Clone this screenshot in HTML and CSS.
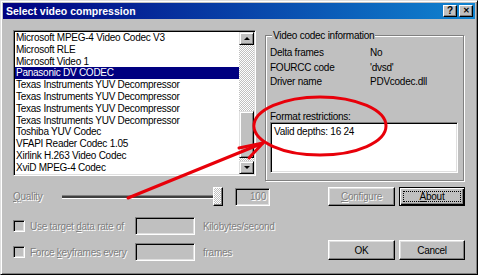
FILE: index.html
```html
<!DOCTYPE html>
<html lang="en">
<head>
  <meta charset="UTF-8">
  <title>Select video compression</title>
  <link rel="stylesheet" href="styles.css">
</head>
<body>

  <div class="window">
    <div class="titlebar">
      <span class="title">Select video compression</span>
      <span class="tbtn">?</span>
      <span class="tbtn close">&#x2715;</span>
    </div>

    <div class="main">
      <div class="top">
        <div class="listbox">
          <ul class="items">
            <li>Microsoft MPEG-4 Video Codec V3</li>
            <li>Microsoft RLE</li>
            <li>Microsoft Video 1</li>
            <li class="selected">Panasonic DV CODEC</li>
            <li>Texas Instruments YUV Decompressor</li>
            <li>Texas Instruments YUV Decompressor</li>
            <li>Texas Instruments YUV Decompressor</li>
            <li>Texas Instruments YUV Decompressor</li>
            <li>Toshiba YUV Codec</li>
            <li>VFAPI Reader Codec 1.05</li>
            <li>Xirlink H.263 Video Codec</li>
            <li>XviD MPEG-4 Codec</li>
          </ul>
          <div class="scrollbar">
            <div class="sbtn"><span class="arrow up"></span></div>
            <div class="track track-top"></div>
            <div class="thumb"></div>
            <div class="track track-bottom"></div>
            <div class="sbtn"><span class="arrow down"></span></div>
          </div>
        </div>

        <div class="info">
          <div class="group-title">Video codec information</div>
          <div class="info-rows">
            <span>Delta frames</span><span>No</span>
            <span>FOURCC code</span><span>'dvsd'</span>
            <span>Driver name</span><span>PDVcodec.dll</span>
          </div>
          <div class="restrict-label">Format restrictions:</div>
          <div class="restrict-box">Valid depths: 16 24</div>
        </div>
      </div>

      <div class="bottom">
        <div class="controls">
          <div class="row quality">
            <span class="disabled quality-label"><u>Q</u>uality</span>
            <div class="slider">
              <div class="slider-track"></div>
              <div class="slider-thumb"></div>
            </div>
            <div class="edit small disabled">100</div>
          </div>
          <div class="row rate">
            <span class="check"></span>
            <span class="disabled check-label">Use target <u>d</u>ata rate of</span>
            <div class="edit"></div>
            <span class="disabled unit">Kilobytes/second</span>
          </div>
          <div class="row keys">
            <span class="check"></span>
            <span class="disabled check-label">Force <u>k</u>eyframes every</span>
            <div class="edit"></div>
            <span class="disabled unit">frames</span>
          </div>
        </div>

        <div class="buttons">
          <div class="btn"><span class="disabled"><u>C</u>onfigure</span></div>
          <div class="btn default"><span class="focus"><u>A</u>bout</span></div>
          <div class="btn tall">OK</div>
          <div class="btn tall">Cancel</div>
        </div>
      </div>
    </div>

    <svg class="annotation" width="478" height="275" viewBox="0 0 478 275">
      <ellipse cx="319" cy="125" rx="66" ry="29" />
      <polyline points="127,197 262,142" />
      <polyline points="238,147 262,142 248,157" />
    </svg>
  </div>

</body>
</html>
```

FILE: styles.css
```css
* {
  margin: 0;
  padding: 0;
  box-sizing: border-box;
}

body {
  width: 478px;
  height: 275px;
  overflow: hidden;
  font-family: "Liberation Sans", Arial, sans-serif;
  font-size: 10px;
  letter-spacing: -0.25px;
  white-space: nowrap;
  color: #000;
  background: #c0c0c0;
}

.window {
  position: relative;
  width: 478px;
  height: 275px;
  padding: 2px;
  background: #c0c0c0;
  border: 1px solid;
  border-color: #dfdfdf #000 #000 #dfdfdf;
  box-shadow: inset 1px 1px #fff, inset -1px -1px #808080;
}

/* title bar */

.titlebar {
  display: flex;
  align-items: center;
  height: 16px;
  padding: 0 2px 0 3px;
  background: linear-gradient(to right, #000080, #1084d0);
  color: #fff;
}

.title {
  flex: 1;
  font-weight: bold;
  font-size: 10.5px;
  letter-spacing: 0;
}

.tbtn {
  width: 14px;
  height: 12px;
  margin-left: 2px;
  background: #c0c0c0;
  color: #000;
  font-weight: bold;
  font-size: 10px;
  line-height: 10px;
  letter-spacing: 0;
  text-align: center;
  border: 1px solid;
  border-color: #fff #000 #000 #fff;
  box-shadow: inset -1px -1px #808080;
}

.tbtn.close {
  font-size: 8px;
}

/* layout */

.main {
  padding: 11px 0 0 10px;
}

.top {
  display: flex;
  gap: 9px;
}

/* list */

.listbox {
  display: flex;
  width: 243px;
  height: 146px;
  background: #fff;
  border: 1px solid;
  border-color: #808080 #fff #fff #808080;
  box-shadow: inset 1px 1px #000, inset -1px -1px #dfdfdf;
  padding: 1px;
}

.items {
  flex: 1;
  list-style: none;
  overflow: hidden;
}

.items li {
  height: 11.8px;
  line-height: 11.8px;
  padding-left: 1px;
}

.items li.selected {
  background: #000080;
  color: #fff;
}

.scrollbar {
  display: flex;
  flex-direction: column;
  width: 15px;
}

.sbtn {
  display: flex;
  align-items: center;
  justify-content: center;
  height: 13px;
  background: #c0c0c0;
  border: 1px solid;
  border-color: #dfdfdf #000 #000 #dfdfdf;
  box-shadow: inset 1px 1px #fff, inset -1px -1px #808080;
}

.arrow {
  width: 0;
  height: 0;
  border-left: 3px solid transparent;
  border-right: 3px solid transparent;
}

.arrow.up {
  border-bottom: 3px solid #000;
}

.arrow.down {
  border-top: 3px solid #000;
}

.track {
  background: repeating-conic-gradient(#c0c0c0 0 25%, #fff 0 50%) 0 0 / 2px 2px;
}

.track-top {
  height: 66px;
}

.track-bottom {
  height: 3px;
}

.thumb {
  height: 47px;
  background: #c0c0c0;
  border: 1px solid;
  border-color: #dfdfdf #000 #000 #dfdfdf;
  box-shadow: inset 1px 1px #fff, inset -1px -1px #808080;
}

/* codec info group */

.info {
  width: 199px;
  height: 146px;
  margin-top: 5px;
  padding: 0 0 0 4px;
  border: 1px solid #808080;
  box-shadow: inset 1px 1px #fff, 1px 1px #fff;
}

.group-title {
  width: fit-content;
  height: 13px;
  line-height: 13px;
  margin: -7px 0 0 2px;
  padding: 0 1px;
  background: #c0c0c0;
}

.info-rows {
  display: grid;
  grid-template-columns: 100px auto;
  grid-auto-rows: 14.5px;
  line-height: 14.5px;
  margin-top: 4px;
}

.restrict-label {
  height: 11px;
  line-height: 11px;
  margin-top: 21.5px;
}

.restrict-box {
  width: 188px;
  height: 51px;
  padding: 2px 0 0 3px;
  line-height: 13px;
  background: #fff;
  border: 1px solid;
  border-color: #808080 #fff #fff #808080;
  box-shadow: inset 1px 1px #000, inset -1px -1px #dfdfdf;
}

/* bottom controls */

.bottom {
  display: flex;
  margin-top: 6px;
}

.controls {
  width: 315px;
}

.row {
  display: flex;
  align-items: center;
  height: 18px;
}

.row.quality {
  height: 19px;
}

.row.rate {
  margin-top: 11px;
}

.row.keys {
  margin-top: 8px;
}

.disabled {
  color: #808080;
  text-shadow: 1px 1px 0 #fff;
}

.quality-label {
  width: 49px;
}

.slider {
  display: flex;
  align-items: center;
  width: 161px;
  height: 19px;
}

.slider-track {
  width: 154px;
  height: 4px;
  background: #404040;
  border-top: 1px solid #808080;
  border-bottom: 1px solid #fff;
  border-right: 1px solid #dfdfdf;
}

.slider-thumb {
  width: 10px;
  height: 19px;
  margin-left: -3px;
  background: repeating-conic-gradient(#c0c0c0 0 25%, #fff 0 50%) 0 0 / 2px 2px;
  border: 1px solid;
  border-color: #fff #000 #000 #fff;
  box-shadow: inset -1px -1px #808080;
}

.edit {
  width: 60px;
  height: 18px;
  background: #c0c0c0;
  border: 1px solid;
  border-color: #808080 #fff #fff #808080;
  box-shadow: inset 1px 1px #000, inset -1px -1px #dfdfdf;
}

.edit.small {
  width: 35px;
  margin-left: 12px;
  padding-right: 3px;
  line-height: 16px;
  text-align: right;
}

.check {
  width: 12px;
  height: 12px;
  background: #c0c0c0;
  border: 1px solid;
  border-color: #808080 #fff #fff #808080;
  box-shadow: inset 1px 1px #000, inset -1px -1px #dfdfdf;
}

.check-label {
  width: 110px;
  padding-left: 5px;
}

.unit {
  margin-left: 8px;
}

/* buttons */

.buttons {
  display: grid;
  grid-template-columns: 67px 66px;
  grid-template-rows: 19px 20px;
  column-gap: 4px;
  row-gap: 34px;
}

.btn {
  display: flex;
  align-items: center;
  justify-content: center;
  background: #c0c0c0;
  border: 1px solid;
  border-color: #fff #000 #000 #fff;
  box-shadow: inset -1px -1px #808080, inset 1px 1px #dfdfdf;
}

.btn.default {
  border-color: #000;
  box-shadow: inset 1px 1px #fff, inset -1px -1px #000, inset -2px -2px #808080;
  padding: 3px;
}

.focus {
  flex: 1;
  align-self: stretch;
  display: flex;
  align-items: center;
  justify-content: center;
  border: 1px dotted #000;
}

/* red annotation drawn over the dialog */

.annotation {
  position: absolute;
  left: 0;
  top: 0;
  pointer-events: none;
  fill: none;
  stroke: #e8000a;
  stroke-width: 3;
  stroke-linecap: round;
  stroke-linejoin: round;
}
```
